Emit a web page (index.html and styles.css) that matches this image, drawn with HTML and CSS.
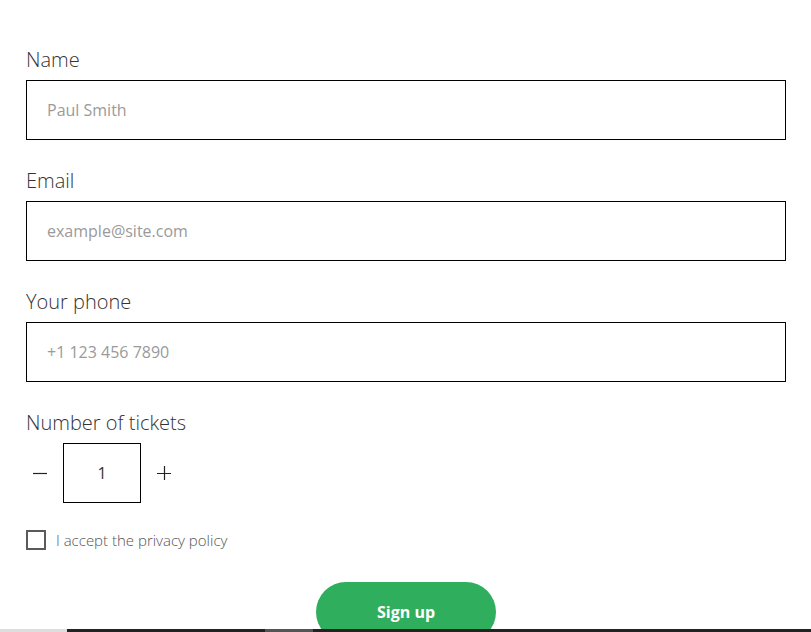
FILE: index.html
```html
<!DOCTYPE html>
<html lang="en">
<head>
<meta charset="utf-8">
<title>Sign up</title>
<link rel="stylesheet" href="styles.css">
</head>
<body>
<form class="form">
  <div class="field">
    <label class="label" for="name">Name</label>
    <input class="input" id="name" type="text" placeholder="Paul Smith">
  </div>
  <div class="field">
    <label class="label" for="email">Email</label>
    <input class="input" id="email" type="email" placeholder="example@site.com">
  </div>
  <div class="field">
    <label class="label" for="phone">Your phone</label>
    <input class="input" id="phone" type="tel" placeholder="+1 123 456 7890">
  </div>
  <div class="field">
    <span class="label">Number of tickets</span>
    <div class="stepper">
      <button type="button" class="step-btn" aria-label="Decrease">
        <svg width="14" height="14" viewBox="0 0 14 14"><path d="M0 7.5h14" stroke="#222" stroke-width="1.2" fill="none"/></svg>
      </button>
      <div class="count">1</div>
      <button type="button" class="step-btn" aria-label="Increase">
        <svg width="14" height="14" viewBox="0 0 14 14"><path d="M0 7.5h14M7.5 0v14" stroke="#222" stroke-width="1.2" fill="none"/></svg>
      </button>
    </div>
  </div>
  <label class="check">
    <span class="box"></span>
    <span class="check-text">I accept the privacy policy</span>
  </label>
  <div class="actions">
    <button type="button" class="submit">Sign up</button>
  </div>
</form>
<div class="scrollbar"><div class="track"><div class="thumb"></div></div></div>
</body>
</html>
```
FILE: styles.css
```css
* { box-sizing: border-box; }
html, body { margin: 0; padding: 0; background: #fff; overflow: hidden; }
body { font-family: "Open Sans", "Liberation Sans", sans-serif; color: #333; }
.form { padding: 46px 25px 0 26px; display: flex; flex-direction: column; }
.field { display: flex; flex-direction: column; margin-bottom: 27px; }
.label { font-size: 20px; font-weight: 300; line-height: 28px; color: #333; margin-bottom: 6px; }
.input {
  height: 60px; width: 100%; border: 1px solid #000; border-radius: 0;
  padding: 0 20px; font-family: inherit; font-size: 16px; color: #333; outline: none;
}
.input::placeholder { color: #9a9a9a; font-weight: 400; }
.stepper { display: flex; align-items: center; gap: 9px; height: 60px; }
.step-btn {
  width: 28px; height: 28px; padding: 0; border: 0; background: none;
  display: flex; align-items: center; justify-content: center;
}
.count {
  width: 78px; height: 60px; border: 1px solid #000; display: flex;
  align-items: center; justify-content: center; font-size: 16px; color: #333;
}
.check { display: flex; align-items: center; gap: 10px; height: 20px; }
.box { width: 20px; height: 20px; border: 2px solid #5a5a5a; }
.check-text { font-size: 15px; font-weight: 300; color: #555; }
.actions { display: flex; justify-content: center; margin-top: 32px; }
.submit {
  width: 180px; height: 60px; border: 0; border-radius: 30px; background: #2fae5e;
  color: #fff; font-family: inherit; font-size: 16px; font-weight: 700; padding: 0;
}
.scrollbar { position: fixed; left: 0; right: 0; bottom: 0; height: 3px; background: #ddd; }
.track { position: absolute; left: 67px; right: 0; top: 0; bottom: 0; background: #222; }
.thumb { position: absolute; left: 198px; width: 48px; top: 0; bottom: 0; background: #555; }
```
